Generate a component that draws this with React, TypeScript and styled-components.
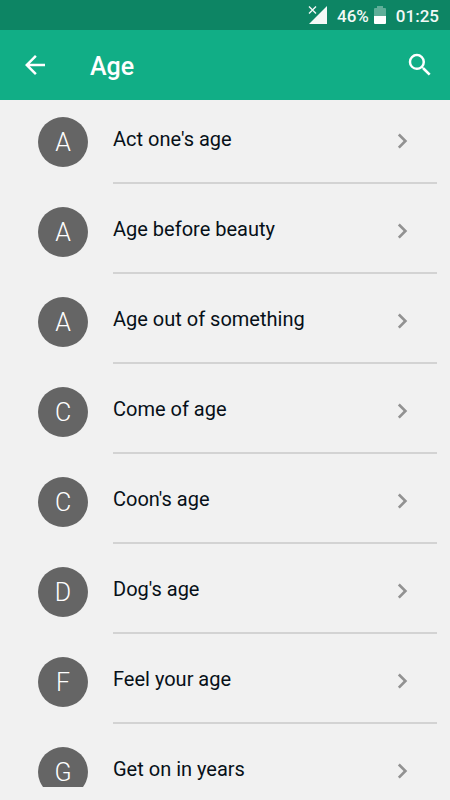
import React from "react";
import styled, { createGlobalStyle } from "styled-components";

const GlobalStyle = createGlobalStyle`
  *, *::before, *::after { box-sizing: border-box; }
  body {
    margin: 0;
    background: #f1f1f1;
    font-family: Roboto, "Liberation Sans", sans-serif;
  }
`;

const Screen = styled.div`
  display: flex;
  flex-direction: column;
  height: 100vh;
`;

const StatusBar = styled.div`
  display: flex;
  flex: none;
  align-items: center;
  justify-content: flex-end;
  height: 30px;
  padding: 2px 11px 0 0;
  background: #0d8564;
  color: #f3f9f7;
  font-size: 17px;
  font-weight: 500;
  line-height: 20px;
`;

const SignalIcon = styled.svg`
  width: 20px;
  height: 20px;
  margin: 0 9px 2px 0;
`;

const BatteryIcon = styled.svg`
  width: 12px;
  height: 20px;
  margin: 0 10px 2px 5px;
`;

const AppBar = styled.header`
  display: flex;
  flex: none;
  align-items: center;
  height: 70px;
  padding: 0 15px 0 20px;
  background: #11ae86;
  color: #ffffff;
`;

const IconButton = styled.button`
  display: flex;
  flex: none;
  padding: 0;
  border: 0;
  background: none;
  color: inherit;
  cursor: pointer;
`;

const Icon = styled.svg`
  flex: none;
  width: 30px;
  height: 30px;
  fill: currentColor;
`;

const Title = styled.h1`
  flex: 1;
  margin: 0 0 0 40px;
  padding-top: 4px;
  font-size: 25px;
  font-weight: 500;
  line-height: 30px;
`;

const List = styled.ul`
  display: flex;
  flex: 1;
  flex-direction: column;
  gap: 6px;
  min-height: 0;
  margin: 0 0 13px;
  padding: 0;
  overflow: hidden;
  list-style: none;
`;

const Row = styled.li`
  flex: none;
`;

const RowLink = styled.a`
  display: flex;
  align-items: stretch;
  height: 84px;
  padding: 0 13px 0 38px;
  text-decoration: none;
`;

const Avatar = styled.span`
  display: flex;
  flex: none;
  align-items: center;
  justify-content: center;
  align-self: center;
  width: 50px;
  height: 50px;
  margin-right: 25px;
  padding-top: 2px;
  border-radius: 50%;
  background: #656565;
  color: #ffffff;
  font-size: 25px;
  font-weight: 300;
  line-height: 30px;
`;

const RowBody = styled.span`
  display: flex;
  flex: 1;
  align-items: center;
  justify-content: space-between;
  padding-right: 20px;
  border-bottom: 2px solid #d3d3d3;
  color: #929292;
`;

const Phrase = styled.span`
  padding-bottom: 4px;
  color: #071018;
  font-size: 20px;
  line-height: 24px;
`;

const phrases = [
  "Act one's age",
  "Age before beauty",
  "Age out of something",
  "Come of age",
  "Coon's age",
  "Dog's age",
  "Feel your age",
  "Get on in years",
];

export default function App() {
  return (
    <Screen>
      <GlobalStyle />
      <StatusBar>
        <SignalIcon viewBox="0 0 20 20" aria-label="No signal" role="img">
          <path d="M19 1v18H1z" fill="#f3f9f7" />
          <path d="M1 1.5l7 7M8 1.5l-7 7" stroke="#f3f9f7" strokeWidth="1.4" fill="none" />
        </SignalIcon>
        <span>46%</span>
        <BatteryIcon viewBox="0 0 12 20" aria-label="Battery" role="img">
          <path d="M3 1h6v2h2q1 0 1 1v7H0V4q0-1 1-1h2z" fill="#5fae98" />
          <path d="M0 11h12v7q0 1-1 1H1q-1 0-1-1z" fill="#ffffff" />
        </BatteryIcon>
        <time>01:25</time>
      </StatusBar>
      <AppBar>
        <IconButton type="button" aria-label="Back">
          <Icon viewBox="0 0 24 24" aria-hidden="true">
            <path d="M20 11H7.83l5.59-5.59L12 4l-8 8 8 8 1.41-1.41L7.83 13H20v-2z" />
          </Icon>
        </IconButton>
        <Title>Age</Title>
        <IconButton type="button" aria-label="Search">
          <Icon viewBox="0 0 24 24" aria-hidden="true">
            <path d="M15.5 14h-.79l-.28-.27A6.47 6.47 0 0 0 16 9.5 6.5 6.5 0 1 0 9.5 16c1.61 0 3.09-.59 4.23-1.57l.27.28v.79l5 4.99L20.49 19l-4.99-5zm-6 0C7.01 14 5 11.99 5 9.5S7.01 5 9.5 5 14 7.01 14 9.5 11.99 14 9.5 14z" />
          </Icon>
        </IconButton>
      </AppBar>
      <List>
        {phrases.map((phrase) => (
          <Row key={phrase}>
            <RowLink href="#">
              <Avatar aria-hidden="true">{phrase[0]}</Avatar>
              <RowBody>
                <Phrase>{phrase}</Phrase>
                <Icon viewBox="0 0 24 24" aria-hidden="true">
                  <path d="M10.2 6L8.7 7.5 13.2 12l-4.5 4.5 1.5 1.5 6-6z" />
                </Icon>
              </RowBody>
            </RowLink>
          </Row>
        ))}
      </List>
    </Screen>
  );
}
